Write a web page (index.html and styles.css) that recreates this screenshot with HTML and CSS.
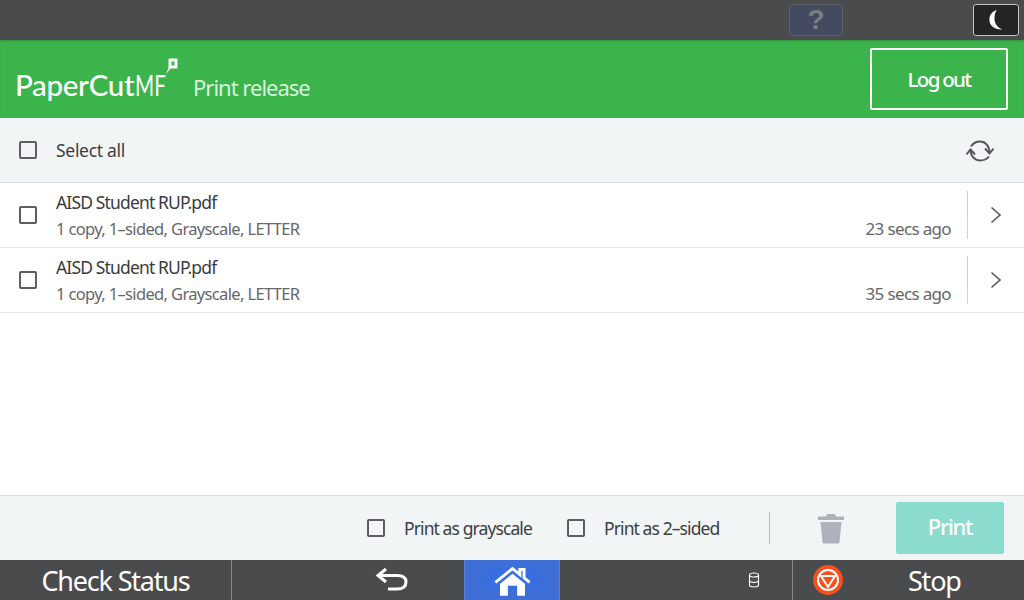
FILE: index.html
```html
<!DOCTYPE html>
<html lang="en">
<head>
<meta charset="utf-8">
<title>Print release</title>
<link rel="stylesheet" href="styles.css">
</head>
<body>
<div class="screen">
  <div class="status-bar">
    <div class="help-btn">?</div>
    <div class="moon-btn">
      <svg width="16" height="22" viewBox="0 0 16 22"><path d="M9 1 C3 3 1 7 1.500 12 C2 17 7 21 14.500 20.500 C10 19 6.500 15 6.500 10 C6.500 6 7 3 9 1 Z" fill="#fff"/></svg>
    </div>
  </div>
  <header class="app-header">
    <div class="brand">
      <span class="brand-name">PaperCut</span><span class="brand-mf">MF</span>
      <svg class="brand-mark" width="13" height="19" viewBox="0 0 13 19"><path d="M4.500 0.500 H12.500 V9.500 Q12.500 10.500 11.500 10.500 H5.500 L1 16 L3.500 10 V1.500 Q3.500 0.500 4.500 0.500 Z M6.500 3.500 V7.500 H9.500 V3.500 Z" fill="#fff" fill-rule="evenodd"/></svg>
    </div>
    <div class="app-title">Print release</div>
    <div class="logout">Log out</div>
  </header>
  <div class="toolbar">
    <span class="check"></span>
    <span class="select-all">Select all</span>
    <svg class="refresh" width="28" height="24" viewBox="0 0 28 24" fill="none" stroke="#55575b" stroke-width="2"><path d="M5 7.500 C7 4.500 10 2.500 14 2.500 C19.500 2.500 23.500 7 23.500 14"/><path d="M23 17.500 C21 20 18 21.500 14 21.500 C8.500 21.500 4.500 17 4.500 10.500"/><path d="M19 9.500 L23.500 14.500 L27.500 9.500"/><path d="M0.500 15.500 L4.500 10.500 L9 15.500"/></svg>
  </div>
  <ul class="jobs">
    <li class="job">
      <span class="check"></span>
      <div class="job-info">
        <div class="job-name">AISD Student RUP.pdf</div>
        <div class="job-meta">1 copy, 1–sided, Grayscale, LETTER</div>
      </div>
      <div class="job-time">23 secs ago</div>
      <div class="job-open"><svg width="12" height="18" viewBox="0 0 12 18" fill="none" stroke="#55575b" stroke-width="1.600"><path d="M1.500 1.500 L10 9 L1.500 16.500"/></svg></div>
    </li>
    <li class="job">
      <span class="check"></span>
      <div class="job-info">
        <div class="job-name">AISD Student RUP.pdf</div>
        <div class="job-meta">1 copy, 1–sided, Grayscale, LETTER</div>
      </div>
      <div class="job-time">35 secs ago</div>
      <div class="job-open"><svg width="12" height="18" viewBox="0 0 12 18" fill="none" stroke="#55575b" stroke-width="1.600"><path d="M1.500 1.500 L10 9 L1.500 16.500"/></svg></div>
    </li>
  </ul>
  <div class="actions">
    <label class="option"><span class="check"></span><span>Print as grayscale</span></label>
    <label class="option"><span class="check"></span><span>Print as 2–sided</span></label>
    <span class="actions-rule"></span>
    <svg class="trash" width="28" height="32" viewBox="0 0 28 32"><path d="M10 2 H18 L19 4.500 H27 V8 H1 V4.500 H9 Z" fill="#aeb2bb"/><path d="M3.500 10 H24.500 L22.500 30 Q22.300 31.500 21 31.500 H7 Q5.700 31.500 5.500 30 Z" fill="#aeb2bb"/></svg>
    <div class="print-btn">Print</div>
  </div>
  <nav class="device-bar">
    <div class="check-status">Check Status</div>
    <div class="back">
      <svg width="34" height="26" viewBox="0 0 34 26" fill="none" stroke="#fff" stroke-width="3"><path d="M11 3 L3 9.500 L11 16"/><path d="M3.500 9.500 H22 Q31 9.500 31 16 Q31 23 22 23 H13"/></svg>
    </div>
    <div class="home">
      <svg width="37" height="31" viewBox="0 0 40 32"><path d="M1.500 17 L20 2 L28 8.500 V3 H32.500 V12 L38.500 17" fill="none" stroke="#fff" stroke-width="3.200"/><path d="M6.500 18.500 L20 7.500 L33.500 18.500 V31.500 H25 V20.500 H15 V31.500 H6.500 Z" fill="#fff"/><rect x="17.500" y="23" width="5" height="8.500" fill="#3f6fd6"/></svg>
    </div>
    <div class="device-gap">
      <svg width="12" height="16" viewBox="0 0 12 16" fill="none" stroke="#fff" stroke-width="1.100"><ellipse cx="6" cy="3" rx="4.500" ry="2"/><path d="M1.500 3 V13 C1.500 15.600 10.500 15.600 10.500 13 V3"/><path d="M1.500 8.500 C1.500 11 10.500 11 10.500 8.500"/></svg>
    </div>
    <div class="stop">
      <svg class="stop-icon" width="30" height="30" viewBox="0 0 30 30"><circle cx="15" cy="15" r="15" fill="#f4511e"/><circle cx="15" cy="15" r="10" fill="none" stroke="#fff" stroke-width="2"/><path d="M8 11 H22 L15 22 Z" fill="none" stroke="#fff" stroke-width="2"/></svg>
      <span class="stop-label">Stop</span>
    </div>
  </nav>
</div>
</body>
</html>
```

FILE: styles.css
```css
* { box-sizing: border-box; }
html, body { margin: 0; padding: 0; }
body { font-family: "Noto Sans", sans-serif; color: #3c3e42; }
.screen { width: 1024px; height: 600px; display: flex; flex-direction: column; overflow: hidden; background: #fff; }

.status-bar { height: 40px; background: #4a4b4d; display: flex; align-items: center; justify-content: flex-end; padding-right: 5px; }
.help-btn { width: 54px; height: 32px; margin-right: 130px; background: #444b61; border: 1px solid #5f6168; border-radius: 3px; color: #7d7e82; font: bold 28px/30px "Liberation Sans", sans-serif; text-align: center; }
.moon-btn { width: 46px; height: 32px; background: #242424; border: 1px solid #c4c4c4; border-radius: 3px; display: flex; align-items: center; justify-content: center; }

.app-header { height: 78px; background: #3bb44c; display: flex; align-items: center; padding: 0 16px 0 15px; box-shadow: inset 0 2px 2px -1px #35903f; color: #fff; }
.brand { display: flex; align-items: baseline; width: 178px; position: relative; margin-top: 12px; }
.brand-name { font: 500 29.500px/34px "Lato", sans-serif; letter-spacing: -0.3px; }
.brand-mf { display: inline-block; font: 400 29.500px/34px "Lato", sans-serif; margin-left: 1px; transform: scaleX(0.7); transform-origin: left; }
.brand-mark { position: absolute; left: 150px; top: -10px; }
.app-title { font-size: 22px; letter-spacing: -1px; margin-top: 16px; color: #d9f2dc; }
.logout { margin-left: auto; width: 138px; height: 62px; border: 2px solid #fff; border-radius: 2px; display: flex; align-items: center; justify-content: center; font-size: 20.500px; font-weight: 500; letter-spacing: -1.700px; }

.check { width: 18px; height: 18px; border: 2px solid #5c5e62; border-radius: 2px; flex: none; }
.toolbar { height: 65px; background: #f2f5f6; border-bottom: 1px solid #d6dbdf; display: flex; align-items: center; padding: 0 30px 0 19px; }
.select-all { margin-left: 19px; font-size: 17.500px; letter-spacing: -0.3px; margin-top: -1px; }
.refresh { margin-left: auto; margin-top: 1px; }

.jobs { list-style: none; margin: 0; padding: 0; flex: 1; }
.job { height: 65px; border-bottom: 1px solid #e3e5e7; display: flex; align-items: center; padding-left: 19px; }
.job-info { margin-left: 19px; flex: 1; }
.job-name { font-size: 17.500px; line-height: 24px; letter-spacing: -0.85px; color: #3a3c40; margin-top: 1px; }
.job-meta { font-size: 16.500px; line-height: 26px; letter-spacing: -0.65px; color: #65676b; margin-top: 2px; }
.job-time { align-self: flex-end; font-size: 17px; line-height: 24px; letter-spacing: -0.65px; color: #65676b; margin-bottom: 6px; margin-right: 16px; }
.job-open { width: 57px; height: 48px; border-left: 1px solid #cfd2d6; display: flex; align-items: center; justify-content: center; }

.actions { height: 65px; background: #f2f5f6; border-top: 1px solid #d6dbdf; display: flex; align-items: center; padding: 0 20px 0 367px; }
.option { display: flex; align-items: center; gap: 19px; font-size: 17.500px; letter-spacing: -0.9px; width: 200px; }
.actions-rule { width: 1px; height: 32px; background: #b9bcc0; margin-left: 2px; }
.trash { margin-left: 47px; }
.print-btn { margin-left: auto; width: 108px; height: 52px; background: #8bdbce; border-radius: 2px; color: #fff; font-size: 22px; font-weight: 500; letter-spacing: -1.300px; display: flex; align-items: center; justify-content: center; padding-bottom: 4px; }

.device-bar { height: 40px; background: #4a4b4d; color: #fff; display: flex; align-items: stretch; }
.check-status { width: 232px; border-right: 1px solid #87888a; font-size: 27px; letter-spacing: -1.200px; display: flex; align-items: center; justify-content: center; }
.back { width: 232px; display: flex; align-items: center; justify-content: flex-end; padding: 0 55px 3px 0; }
.home { width: 96px; background: radial-gradient(ellipse at center, #2f6cec 0%, #3f6fd6 60%); display: flex; align-items: center; justify-content: center; border-right: 1px solid #5b80d8; border-left: 1px solid #5b80d8; padding-top: 2px; }
.device-gap { width: 232px; display: flex; align-items: center; justify-content: flex-end; padding-right: 32px; }
.stop { flex: 1; border-left: 1px solid #87888a; display: flex; align-items: center; padding-left: 20px; }
.stop-label { font-size: 27px; letter-spacing: -1.200px; margin-left: 65px; }
```
